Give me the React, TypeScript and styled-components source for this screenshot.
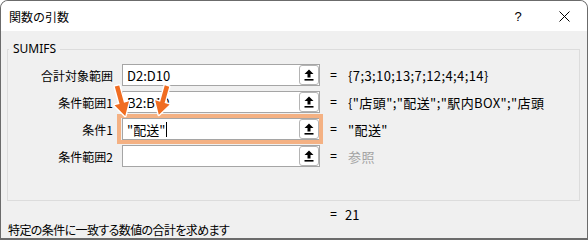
import styled, { createGlobalStyle } from "styled-components";

const GlobalStyle = createGlobalStyle`
  html, body {
    margin: 0;
    padding: 0;
    background: #ffffff;
  }
  body {
    font-family: "Noto Sans CJK JP", "Noto Sans", sans-serif;
  }
`

const rows = [
  { label: "合計対象範囲", input: "D2:D10", value: "{7;3;10;13;7;12;4;4;14}" },
  { label: "条件範囲1", input: "B2:B10", value: "{\"店頭\";\"配送\";\"駅内BOX\";\"店頭\";\"店頭\"}" },
  { label: "条件1", input: "\"配送\"", value: "\"配送\"", active: true },
  { label: "条件範囲2", input: "", value: "参照", empty: true },
];

function RefIcon() {
  return <svg width="10" height="12" viewBox="0 0 10 12">
    <path d="M5 0.5 L9.5 5 H6.5 V8.5 H3.5 V5 H0.5 Z" fill="#000" />
    <rect x="0.5" y="10" width="9" height="1.6" fill="#000" />
  </svg>
}

function Arrow({ x, y, length, angle }) {
  const head = length - 13;
  return <g transform={`translate(${x} ${y}) rotate(${angle})`}>
    <path
      d={`M-2.3 0 H2.3 V${head} H7.5 L0 ${length} L-7.5 ${head} H-2.3 Z`}
      fill="#f06d22"
      stroke="#ffffff"
      strokeWidth="2.8"
      strokeLinejoin="round"
      paintOrder="stroke"
    />
  </g>
}

function App() {
  return <>
    <GlobalStyle />
    <Window>
      <TitleBar>
        <TitleText>関数の引数</TitleText>
        <HelpButton>?</HelpButton>
        <CloseButton>
          <svg width="11" height="11" viewBox="0 0 11 11">
            <path d="M0.5 0.5 L10.5 10.5 M10.5 0.5 L0.5 10.5" stroke="#000" strokeWidth="1" />
          </svg>
        </CloseButton>
      </TitleBar>
      <Body>
        <Group>
          <Legend>SUMIFS</Legend>
          <Rows>
            {rows.map((r) => <Row key={r.label}>
              <Label>{r.label}</Label>
              <InputBox $highlight={r.active}>
                <InputText>
                  {r.input}
                  {r.active && <Caret />}
                </InputText>
                <RefButton><RefIcon /></RefButton>
              </InputBox>
              <Equals>=</Equals>
              <Value $muted={r.empty}>{r.value}</Value>
            </Row>)}
          </Rows>
        </Group>
        <ResultRow>
          <Equals>=</Equals>
          <ResultValue>21</ResultValue>
        </ResultRow>
        <Description>特定の条件に一致する数値の合計を求めます</Description>
      </Body>
      <Annotation width="80" height="44" viewBox="108 80 80 44">
        <Arrow x={117} y={86} length={31} angle={-15.4} />
        <Arrow x={167} y={86} length={30} angle={15.8} />
      </Annotation>
    </Window>
  </>
}

export default App;

const Window = styled.div`
  position: relative;
  width: 588px;
  height: 240px;
  box-sizing: border-box;
  border: 1px solid #6b6b6b;
  border-bottom-width: 2px;
  border-radius: 8px 8px 0 0;
  background: #f0f0f0;
  overflow: hidden;
  display: flex;
  flex-direction: column;
`

const TitleBar = styled.div`
  display: flex;
  align-items: center;
  flex-shrink: 0;
  height: 30px;
  background: #ffffff;
  padding-left: 8px;
`

const TitleText = styled.span`
  font-size: 12px;
  color: #000;
  flex: 1;
`

const HelpButton = styled.div`
  width: 46px;
  text-align: center;
  font-family: "Liberation Sans", sans-serif;
  font-size: 13px;
  color: #000;
`

const CloseButton = styled.div`
  width: 46px;
  display: flex;
  justify-content: center;
  align-items: center;
`

const Body = styled.div`
  display: flex;
  flex-direction: column;
  padding: 10px 7px 0 6px;
`

const Group = styled.fieldset`
  margin: 0;
  padding: 0 0 33px 0;
  width: 573px;
  box-sizing: border-box;
  border: 1px solid #dcdcdc;
  min-inline-size: 0;
`

const Legend = styled.legend`
  margin-left: 1px;
  padding: 0 4px;
  font-family: "Noto Sans", sans-serif;
  font-size: 12px;
  line-height: 16px;
  color: #000;
`

const Rows = styled.div`
  display: flex;
  flex-direction: column;
  gap: 5px;
  padding-top: 7px;
`

const Row = styled.div`
  display: grid;
  grid-template-columns: 114px 198px 28px 197px;
  align-items: center;
  height: 22px;
`

const Label = styled.span`
  text-align: right;
  padding-right: 9px;
  font-size: 12px;
  color: #000;
  white-space: nowrap;
`

const InputBox = styled.div`
  position: relative;
  display: flex;
  align-items: center;
  height: 22px;
  box-sizing: border-box;
  border: 1px solid #a5a5a5;
  background: #ffffff;

  ${(p) => p.$highlight && `
    &::after {
      content: "";
      position: absolute;
      top: -5px;
      left: -6px;
      right: -4px;
      bottom: -5px;
      border: 4px solid #f4b183;
      pointer-events: none;
    }
  `}
`

const InputText = styled.span`
  flex: 1;
  display: flex;
  align-items: center;
  padding-left: 4px;
  font-size: 13px;
  color: #000;
  white-space: nowrap;
  overflow: hidden;
`

const Caret = styled.span`
  display: inline-block;
  width: 1px;
  height: 15px;
  margin-left: 1px;
  background: #000;
`

const RefButton = styled.div`
  display: flex;
  align-items: center;
  justify-content: center;
  width: 20px;
  height: 20px;
  box-sizing: border-box;
  border: 1px solid #b4b4b4;
  border-radius: 3px;
  background: #ffffff;
`

const Equals = styled.span`
  padding-left: 10px;
  font-family: "Liberation Sans", sans-serif;
  font-size: 12px;
  color: #000;
`

const Value = styled.span`
  font-size: 13px;
  letter-spacing: 0.4px;
  color: ${(p) => (p.$muted ? "#a3a3a3" : "#000")};
  white-space: nowrap;
  overflow: hidden;
  font-feature-settings: "palt";
`

const ResultRow = styled.div`
  display: flex;
  align-items: center;
  height: 18px;
  margin-top: 4px;
  padding-left: 313px;
  gap: 8px;
`

const ResultValue = styled.span`
  font-size: 13px;
  color: #000;
`

const Description = styled.div`
  margin-top: -2px;
  margin-left: 1px;
  font-size: 12px;
  letter-spacing: -0.6px;
  color: #000;
  white-space: nowrap;
  font-feature-settings: "palt";
`

const Annotation = styled.svg`
  position: absolute;
  left: 107px;
  top: 79px;
  overflow: visible;
  pointer-events: none;
`
